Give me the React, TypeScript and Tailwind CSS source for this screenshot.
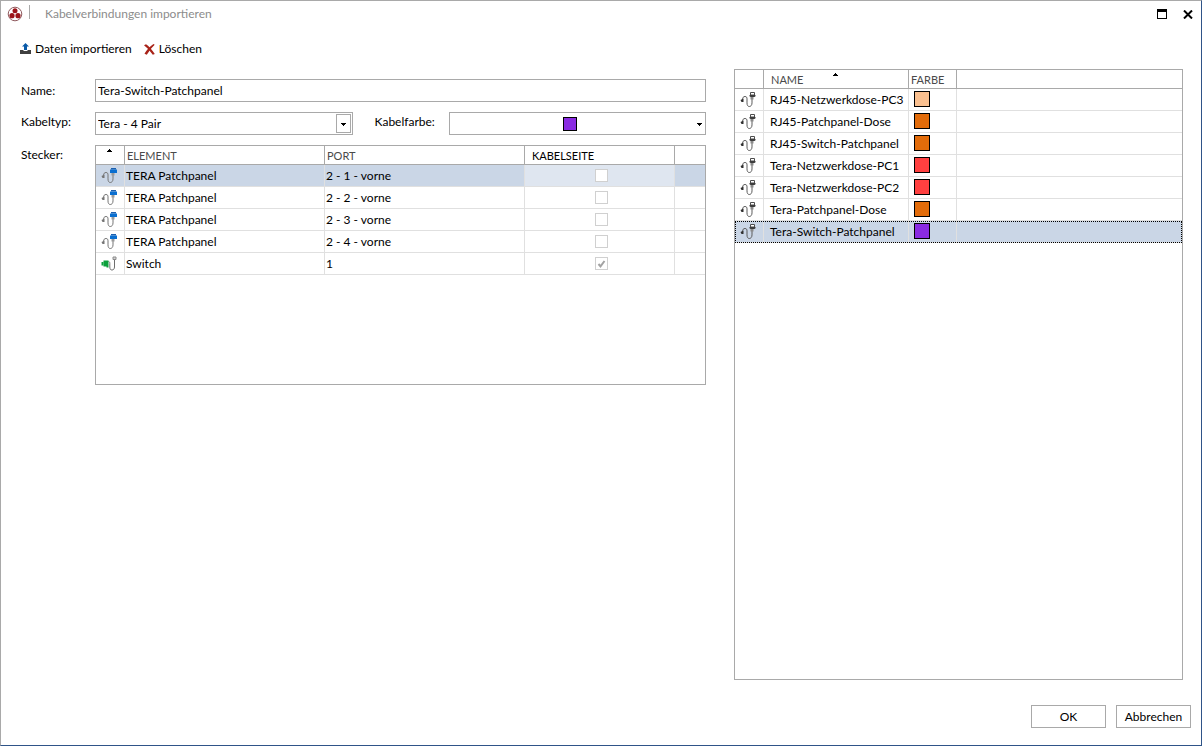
import { useState } from "react";

type PlugKind = "blue" | "green" | "plain";

function CableIcon({ kind }: { kind: PlugKind }) {
  if (kind === "green") {
    return (
      <svg width="16" height="16" viewBox="0 0 16 16" fill="none" aria-hidden="true">
        <path d="M7.500 5.500c1 0 1.300.8 1.300 2v3.500c0 2 .7 3 2.100 3s2.600-1 2.600-3V4" stroke="#6e6e6e" />
        <path d="M12 1h3v2.500h-3z" stroke="#8a8a8a" fill="#d4d4d4" />
        <path d="M2.500 4.500H7.500v7h-2v-1H2.500z" fill="#0ca03c" />
        <path d="M.5 6h2v3.500h-2z" fill="#0ca03c" />
      </svg>
    );
  }
  const blue = kind === "blue";
  return (
    <svg width="16" height="16" viewBox="0 0 16 16" fill="none" aria-hidden="true">
      <path
        d="M2.500 7.500C2.500 5.500 3.500 4.500 5 4.500s2 .9 2 2.400v4c0 2.300.8 3.600 2.300 3.600s2.700-1.300 2.700-3.600V7"
        stroke={blue ? "#757575" : "#5a5a5a"}
      />
      <path d="M.5 8L3.500 6.500v3.500H1.500z" fill={blue ? "#757575" : "#2f2f2f"} />
      {blue ? (
        <>
          <path d="M10.500 5h3v2.500h-3z" fill="#9a9a9a" />
          <path d="M10 0h5v1.500h-5z" fill="#1c5fae" />
          <path d="M9 1.500h7V5H9z" fill="#0a6fd0" />
        </>
      ) : (
        <>
          <path d="M10.500 5h3v2.500h-3z" fill="#8a8a8a" />
          <path d="M10.500 .5h4V3h-4z" stroke="#4d4d4d" fill="#fff" />
          <path d="M9.500 3h6v1.300l-1 .7h-4l-1-.7z" fill="#3d3d3d" />
        </>
      )}
    </svg>
  );
}

function Logo() {
  return (
    <svg width="16" height="16" viewBox="0 0 16 16" aria-hidden="true">
      <circle cx="8" cy="8" r="6.800" fill="#fff" stroke="#8f5a5e" strokeWidth="1" />
      <circle cx="8" cy="4.700" r="2.500" fill="#9c1419" />
      <circle cx="5" cy="9.700" r="2.600" fill="#9c1419" />
      <circle cx="11" cy="9.700" r="2.600" fill="#9c1419" />
    </svg>
  );
}

function SortArrow() {
  return (
    <svg width="5" height="3" viewBox="0 0 5 3" shapeRendering="crispEdges" aria-hidden="true">
      <path d="M2 0h1v1h1v1h1v1H0V2h1V1h1z" fill="#000" />
    </svg>
  );
}

function DropArrow() {
  return (
    <svg width="5" height="3" viewBox="0 0 5 3" shapeRendering="crispEdges" aria-hidden="true">
      <path d="M0 0h5v1H4v1H3v1H2V2H1V1H0z" fill="#000" />
    </svg>
  );
}

function CheckBox({ checked, label }: { checked: boolean; label: string }) {
  return (
    <span className="relative flex h-[13px] w-[13px]">
      <input
        type="checkbox"
        checked={checked}
        disabled
        readOnly
        aria-label={label}
        className="h-[13px] w-[13px] appearance-none border border-[#d0d0d0] bg-white"
      />
      {checked && (
        <svg className="absolute inset-0" width="13" height="13" viewBox="0 0 13 13" fill="none" aria-hidden="true">
          <path d="M3.500 7l2 2.300L9.500 4" stroke="#a3a3a3" strokeWidth="2" />
        </svg>
      )}
    </span>
  );
}

const plugs: { kind: PlugKind; element: string; port: string; side: boolean }[] = [
  { kind: "blue", element: "TERA Patchpanel", port: "2 - 1 - vorne", side: false },
  { kind: "blue", element: "TERA Patchpanel", port: "2 - 2 - vorne", side: false },
  { kind: "blue", element: "TERA Patchpanel", port: "2 - 3 - vorne", side: false },
  { kind: "blue", element: "TERA Patchpanel", port: "2 - 4 - vorne", side: false },
  { kind: "green", element: "Switch", port: "1", side: true },
];

const cables = [
  { name: "RJ45-Netzwerkdose-PC3", color: "bg-[#fac090]" },
  { name: "RJ45-Patchpanel-Dose", color: "bg-[#e36c0a]" },
  { name: "RJ45-Switch-Patchpanel", color: "bg-[#e36c0a]" },
  { name: "Tera-Netzwerkdose-PC1", color: "bg-[#ff4040]" },
  { name: "Tera-Netzwerkdose-PC2", color: "bg-[#ff4040]" },
  { name: "Tera-Patchpanel-Dose", color: "bg-[#e36c0a]" },
  { name: "Tera-Switch-Patchpanel", color: "bg-[#8a2be2]" },
];

const headCell = "h-[19px] border-b border-r border-[#a9a9a9] p-0 text-left font-normal";
const bodyCell = "h-[22px] border-b border-r border-[#e0e0e0] p-0";
const iconCell = "flex items-center justify-center pr-0.5";

export default function App() {
  const [name, setName] = useState("Tera-Switch-Patchpanel");
  const [plugRow, setPlugRow] = useState(0);
  const [cableRow, setCableRow] = useState(6);

  return (
    <div className="flex min-h-screen flex-col border border-b-[#2f5488] border-l-[#a9a9a9] border-r-[#2f5488] border-t-[#a9a9a9] bg-white font-[Lato,sans-serif] text-[12px] leading-4 text-black">
      <header className="flex h-[26px] items-center pl-1.5 pr-2">
        <Logo />
        <span className="mb-1 ml-[6px] h-3.5 w-px bg-[#a9a9a9]" />
        <h1 className="ml-[15px] flex-1 text-[#8c8c8c]">Kabelverbindungen importieren</h1>
        <button type="button" aria-label="Maximieren" className="mr-4">
          <svg width="10" height="10" viewBox="0 0 10 10" shapeRendering="crispEdges" aria-hidden="true">
            <path d="M0 0h10v10H0zM1 3v6h8V3z" fill="#000" fillRule="evenodd" />
          </svg>
        </button>
        <button type="button" aria-label="Schließen">
          <svg width="10" height="9" viewBox="0 0 10 9" aria-hidden="true">
            <path d="M1 .5l8 8M9 .5l-8 8" stroke="#000" strokeWidth="2" />
          </svg>
        </button>
      </header>

      <div className="flex h-[42px] items-center gap-3 pl-[19px] pt-0.5">
        <button type="button" className="flex items-center gap-1">
          <svg width="11" height="12" viewBox="0 0 11 12" aria-hidden="true">
            <path d="M0 7h3.500v1h4V7H11v4H0z" fill="#404040" />
            <path d="M5.500 0L9 3.500H7V7H4V3.500H2z" fill="#0a5aa8" />
          </svg>
          Daten importieren
        </button>
        <button type="button" className="flex items-center gap-1">
          <svg width="11" height="11" viewBox="0 0 11 11" aria-hidden="true">
            <path d="M0 1.300L2 .3Q6 3 10.800 10l-2 .8Q5 5 0 1.300z" fill="#a82318" />
            <path d="M9.500 0l1.200.8Q6 5 2.800 10.800L.5 9.800Q4 3.500 9.500 0z" fill="#a82318" />
          </svg>
          Löschen
        </button>
      </div>

      <main className="flex flex-1 gap-7 pl-5 pr-[18px]">
        <section className="flex min-w-0 flex-1 flex-col gap-[10px] pt-[10px]">
          <div className="flex">
            <label htmlFor="name" className="w-[74px] self-center">
              Name:
            </label>
            <input
              id="name"
              value={name}
              onChange={(e) => setName(e.target.value)}
              className="h-[23px] min-w-0 flex-1 border border-[#a9a9a9] px-0.5 outline-none"
            />
          </div>

          <div className="flex leading-[19px]">
            <label htmlFor="type" className="w-[74px]">
              Kabeltyp:
            </label>
            <div className="relative h-[23px] min-w-0 flex-1 border border-[#a9a9a9]">
              <select id="type" className="h-full w-full appearance-none px-0.5 outline-none">
                <option>Tera - 4 Pair</option>
              </select>
              <span className="pointer-events-none absolute inset-y-px right-px flex w-[15px] items-center justify-center border border-[#a9a9a9] pt-0.5">
                <DropArrow />
              </span>
            </div>
            <label htmlFor="color" className="w-24 pl-[22px]">
              Kabelfarbe:
            </label>
            <div className="relative h-[23px] min-w-0 flex-1 border border-[#a9a9a9]">
              <select id="color" className="h-full w-full appearance-none outline-none">
                <option value="#8a2be2" aria-label="Violett" />
              </select>
              <span className="pointer-events-none absolute inset-0 flex items-center justify-center pr-[14px]">
                <span className="h-3.5 w-3.5 border border-black bg-[#8a2be2]" />
              </span>
              <span className="pointer-events-none absolute inset-y-0 right-[3px] flex items-center pt-0.5">
                <DropArrow />
              </span>
            </div>
          </div>

          <div className="flex">
            <span id="plugs" className="w-[74px] leading-[19px]">
              Stecker:
            </span>
            <div className="h-[240px] min-w-0 flex-1 border border-[#a9a9a9]">
              <table aria-labelledby="plugs" className="w-full table-fixed border-separate border-spacing-0">
                <colgroup>
                  <col className="w-[29px]" />
                  <col className="w-[200px]" />
                  <col className="w-[200px]" />
                  <col className="w-[150px]" />
                  <col />
                </colgroup>
                <thead>
                  <tr className="text-[11px] text-[#4a4a4a]">
                    <th className={headCell}>
                      <div className="flex h-[18px] justify-center pr-0.5 pt-[3px]">
                        <SortArrow />
                      </div>
                    </th>
                    <th className={headCell}>
                      <div className="pl-0.5 pt-px">ELEMENT</div>
                    </th>
                    <th className={headCell}>
                      <div className="pl-0.5 pt-px">PORT</div>
                    </th>
                    <th className={headCell}>
                      <div className="pl-[7px] pt-px text-black">KABELSEITE</div>
                    </th>
                    <th className="border-b border-[#a9a9a9] p-0" />
                  </tr>
                </thead>
                <tbody>
                  {plugs.map((p, i) => (
                    <tr key={i} onClick={() => setPlugRow(i)} className={i === plugRow ? "bg-[#cad6e6]" : ""}>
                      <td className={bodyCell}>
                        <div className={iconCell}>
                          <CableIcon kind={p.kind} />
                        </div>
                      </td>
                      <td className={bodyCell}>
                        <div className="pl-px">{p.element}</div>
                      </td>
                      <td className={bodyCell}>
                        <div className="pl-px">{p.port}</div>
                      </td>
                      <td className={i === plugRow ? `${bodyCell} bg-[#dfe6f0]` : bodyCell}>
                        <div className="flex justify-center pl-1">
                          <CheckBox checked={p.side} label={`Kabelseite ${p.port}`} />
                        </div>
                      </td>
                      <td className="border-b border-[#e0e0e0] p-0" />
                    </tr>
                  ))}
                </tbody>
              </table>
            </div>
          </div>
        </section>

        <section className="w-[449px] border border-[#a9a9a9]">
          <table className="w-full table-fixed border-separate border-spacing-0">
            <colgroup>
              <col className="w-[29px]" />
              <col className="w-[145px]" />
              <col className="w-[48px]" />
              <col />
            </colgroup>
            <thead>
              <tr className="text-[11px] text-[#4a4a4a]">
                <th className={headCell} />
                <th className={headCell}>
                  <div className="relative pl-[7px] pt-px">
                    NAME
                    <span className="absolute inset-x-0 top-0.5 flex justify-center pr-0.5">
                      <SortArrow />
                    </span>
                  </div>
                </th>
                <th className={headCell}>
                  <div className="pl-0.5 pt-px">FARBE</div>
                </th>
                <th className="border-b border-[#a9a9a9] p-0" />
              </tr>
            </thead>
            <tbody>
              {cables.map((c, i) => (
                <tr
                  key={c.name}
                  onClick={() => setCableRow(i)}
                  className={i === cableRow ? "bg-[#cad6e6] outline-1 -outline-offset-1 outline-dotted outline-black" : ""}
                >
                  <td className={bodyCell}>
                    <div className={iconCell}>
                      <CableIcon kind="plain" />
                    </div>
                  </td>
                  <td className={bodyCell}>
                    <div className="pl-1.5">{c.name}</div>
                  </td>
                  <td className={bodyCell}>
                    <div className={`mb-px ml-[5px] h-4 w-4 border border-black ${c.color}`} />
                  </td>
                  <td className="border-b border-[#e0e0e0] p-0" />
                </tr>
              ))}
            </tbody>
          </table>
        </section>
      </main>

      <footer className="flex justify-end gap-[10px] pb-[17px] pr-[10px] pt-[25px]">
        <button type="button" className="h-[23px] w-[75px] border border-[#a9a9a9]">
          OK
        </button>
        <button type="button" className="h-[23px] w-[75px] border border-[#a9a9a9]">
          Abbrechen
        </button>
      </footer>
    </div>
  );
}
